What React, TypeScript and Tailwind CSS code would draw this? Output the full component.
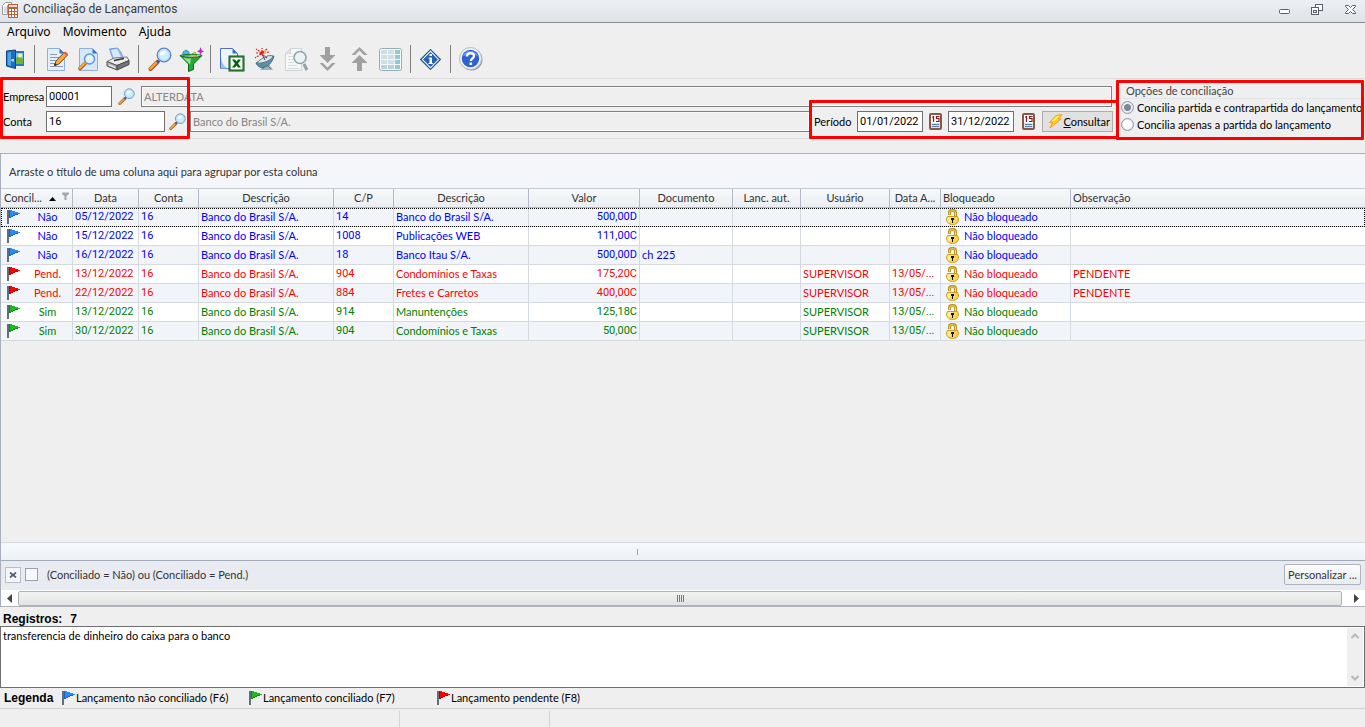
import { useState } from 'react';
import type { ReactNode } from 'react';

type Status = 'nao' | 'pend' | 'sim';

interface Entry {
    status: Status;
    date: string;
    account: string;
    description: string;
    counterpart: string;
    counterpartDescription: string;
    value: string;
    document?: string;
    user?: string;
    changed?: string;
    note?: string;
}

const BANK = 'Banco do Brasil S/A.';

const entries: Entry[] = [
    { status: 'nao', date: '05/12/2022', account: '16', description: BANK, counterpart: '14', counterpartDescription: BANK, value: '500,00D' },
    { status: 'nao', date: '15/12/2022', account: '16', description: BANK, counterpart: '1008', counterpartDescription: 'Publicações WEB', value: '111,00C' },
    { status: 'nao', date: '16/12/2022', account: '16', description: BANK, counterpart: '18', counterpartDescription: 'Banco Itau S/A.', value: '500,00D', document: 'ch 225' },
    { status: 'pend', date: '13/12/2022', account: '16', description: BANK, counterpart: '904', counterpartDescription: 'Condomínios e Taxas', value: '175,20C', user: 'SUPERVISOR', changed: '13/05/...', note: 'PENDENTE' },
    { status: 'pend', date: '22/12/2022', account: '16', description: BANK, counterpart: '884', counterpartDescription: 'Fretes e Carretos', value: '400,00C', user: 'SUPERVISOR', changed: '13/05/...', note: 'PENDENTE' },
    { status: 'sim', date: '13/12/2022', account: '16', description: BANK, counterpart: '914', counterpartDescription: 'Manuntenções', value: '125,18C', user: 'SUPERVISOR', changed: '13/05/...' },
    { status: 'sim', date: '30/12/2022', account: '16', description: BANK, counterpart: '904', counterpartDescription: 'Condomínios e Taxas', value: '50,00C', user: 'SUPERVISOR', changed: '13/05/...' },
];

const statusLabel: Record<Status, string> = { nao: 'Não', pend: 'Pend.', sim: 'Sim' };
const statusText: Record<Status, string> = { nao: 'text-[#0000ff]', pend: 'text-[#ff0000]', sim: 'text-[#008000]' };
const flagColors: Record<Status, [string, string]> = {
    nao: ['#2f8af0', '#1c5fc4'],
    pend: ['#f00808', '#c00000'],
    sim: ['#22b822', '#0f8a0f'],
};

const columns = [
    { label: 'Data', width: 'w-[66px]' },
    { label: 'Conta', width: 'w-[60px]' },
    { label: 'Descrição', width: 'w-[135px]' },
    { label: 'C/P', width: 'w-[60px]' },
    { label: 'Descrição', width: 'w-[135px]' },
    { label: 'Valor', width: 'w-[111px]' },
    { label: 'Documento', width: 'w-[93px]' },
    { label: 'Lanc. aut.', width: 'w-[68px]' },
    { label: 'Usuário', width: 'w-[89px]' },
    { label: 'Data A...', width: 'w-[51px]' },
];

function Flag({ status }: { status: Status }) {
    const [main, dark] = flagColors[status];
    return (
        <svg width="14" height="15" viewBox="0 0 14 15" className="shrink-0" shapeRendering="crispEdges">
            <path d="M0 0h2v14H0z" fill="#5f6f83" />
            <path d="M2 0h3v1h3v1h3v1h2v1h-2v1H8v1H6v1H4v1H2z" fill={main} />
            <path d="M2 7h2v1H2zM4 6h2v1H4zM6 5h2v1H6zM8 4h3v1H8zM2 0h1v7H2z" fill={dark} />
        </svg>
    );
}

function Padlock() {
    return (
        <svg width="13" height="16" viewBox="0 0 13 16" className="shrink-0">
            <path d="M3.500 6V3.500C3.500 0.800 9.500 0.800 9.500 3.500V8" fill="none" stroke="#bd9420" strokeWidth="3" />
            <path d="M3.500 5.500V3.500C3.500 1.200 9.500 1.200 9.500 3.500V8" fill="none" stroke="#f3e08a" strokeWidth="1" />
            <path d="M1.500 7.500h10l1 2.500c0 3.500-2.500 5.500-6 5.500s-6-2-6-5.500z" fill="#f9d65a" stroke="#cf9a1a" />
            <path d="M2 8h5l-4 6C1.500 12.500 1 11 1.500 9.500z" fill="#fff2b0" opacity=".8" />
            <path d="M5 9h3v2H7v3H6v-3H5z" fill="#111" />
        </svg>
    );
}

function Magnifier({ size }: { size: number }) {
    return (
        <svg width={size} height={size} viewBox="0 0 24 24" className="shrink-0">
            <path d="M2.500 22L9.500 15" stroke="#a85c1c" strokeWidth="4" strokeLinecap="round" />
            <path d="M2.500 21.500L9 15" stroke="#f9a640" strokeWidth="2.400" strokeLinecap="round" />
            <path d="M9 15.500l2-2" stroke="#3c5d93" strokeWidth="3" />
            <circle cx="16" cy="8" r="6.800" fill="#cdeefc" stroke="#5f86c4" strokeWidth="1.300" />
            <circle cx="16" cy="8" r="5.500" fill="none" stroke="#b9d9f5" strokeWidth="1.200" />
            <path d="M12 8c0-3 3-5 6-3.500C17 7 15 9 12 8z" fill="#fff" />
        </svg>
    );
}

function CalendarIcon() {
    return (
        <svg width="13" height="17" viewBox="0 0 13 17">
            <rect x="1" y="1" width="11" height="15" rx="1" fill="#cfe0f2" stroke="#8a5648" strokeWidth="2" />
            <path d="M2 2h9v8H2z" fill="#fff" />
            <path d="M3 4h1.500M4.500 3v6M10.500 3.500H7.500v2h2.500v3H7" fill="none" stroke="#8c1616" strokeWidth="1.200" />
            <path d="M3 11.500h7M3 13.500h7" stroke="#5d7fa8" />
        </svg>
    );
}

function AppIcon() {
    return (
        <svg width="17" height="17" viewBox="0 0 17 17">
            <path d="M3.500 1.500h6v3h-4v9h-5v-9z" fill="#f7f7f7" stroke="#9a9a9a" />
            <path d="M2 7h3M2 9h3M2 11h3" stroke="#bdbdbd" />
            <path d="M6 3h10v14H6z" fill="#b9603f" />
            <path d="M7 4h8v2H7z" fill="#fbe3d4" />
            <path d="M7 8h2v2H7zM10 8h2v2h-2zM13 8h2v2h-2zM7 11h2v2H7zM10 11h2v2h-2zM13 11h2v2h-2zM7 14h2v2H7zM10 14h2v2h-2zM13 14h2v2h-2z" fill="#fff" />
        </svg>
    );
}

function DoorIcon() {
    return (
        <svg width="19" height="21" viewBox="0 0 19 21">
            <path d="M6 2h12v15H6z" fill="#2d74b8" />
            <path d="M8 4h9v11H8z" fill="#7cc3f2" />
            <path d="M9 10c3-3 5-2 8 0v5H9z" fill="#6db432" />
            <circle cx="14" cy="6.500" r="2" fill="#fff6a0" />
            <path d="M.5 2l9-1v18.500L.5 17z" fill="#1b6fc0" stroke="#0c4380" />
            <path d="M1.500 3.500L5 3v14l-3.500-1z" fill="#49a7ee" />
            <path d="M5 11h3M7 10v3" stroke="#e8f4ff" />
        </svg>
    );
}

function EditIcon() {
    return (
        <svg width="23" height="25" viewBox="0 0 23 25">
            <path d="M1.500 1.500h12l5 5v17h-17z" fill="#e3effc" stroke="#8fb0da" />
            <path d="M13.500 1.500v5h5z" fill="#3d74c6" />
            <path d="M4 7.500h7M4 10.500h9M4 13.500h7M4 16.500h5M4 19.500h13" stroke="#8d9bb0" />
            <path d="M8.500 18.500l1.500-4.500L18.500 5l3 3-8.500 9z" fill="#f9ab38" stroke="#7a4a18" />
            <path d="M17.500 6l2-1.500 2.500 2.500-1.500 2z" fill="#e8584a" />
            <path d="M8 19l1-3 2 2z" fill="#222" />
        </svg>
    );
}

function PreviewIcon() {
    return (
        <svg width="21" height="25" viewBox="0 0 21 25">
            <path d="M1.500 1.500h13l5 5v17h-18z" fill="#d5e7fb" stroke="#8fb0da" />
            <path d="M14.500 1.500v5h5z" fill="#3d74c6" />
            <path d="M2 21.500l5.500-5.500" stroke="#a85c1c" strokeWidth="3.600" strokeLinecap="round" />
            <path d="M2 21l5-5" stroke="#f9a640" strokeWidth="2.200" strokeLinecap="round" />
            <circle cx="11.500" cy="12" r="5" fill="#d6f3ff" stroke="#6d94cc" strokeWidth="1.500" />
            <path d="M9 12c0-2 2-3 4-2-1 2-2 3-4 2z" fill="#fff" />
        </svg>
    );
}

function PrinterIcon() {
    return (
        <svg width="24" height="24" viewBox="0 0 24 24">
            <path d="M3.500 2l8-1 3 3.500 3 7-10 2z" fill="#8fbbf2" stroke="#6f9ade" />
            <path d="M5 3l6-1 4 8-7 2z" fill="#d8e9fc" />
            <path d="M1 14.500l7-3.500 13-1 2 3.500-12 5z" fill="#ececec" stroke="#777" />
            <path d="M1 14.500l10 4v4.500L1 19z" fill="#b5b5b5" stroke="#555" />
            <path d="M11 18.500l12-5v4L11 23z" fill="#777" stroke="#444" />
            <path d="M3 18l6 2.500" stroke="#f4f4f4" />
            <path d="M8 13.500l10-2" stroke="#333" strokeWidth="1.500" />
        </svg>
    );
}

function FunnelIcon() {
    return (
        <svg width="25" height="25" viewBox="0 0 25 25">
            <path d="M4 5l3-2 3 2v4H4z" fill="#54b4e4" stroke="#3b93c6" />
            <path d="M10 9l6-4 2 4z" fill="#f6d32a" stroke="#c99c14" />
            <path d="M21.500 0l1 3 2.500 1.500-2.500 1-1 3-1-3-2.500-1L20.500 3z" fill="#c322d0" />
            <path d="M1 8.500c5 2.500 18 2.500 22 0l-8.500 8.500v5.500l-5 2v-7.500z" fill="#27a83a" stroke="#0d6a1a" />
            <path d="M4 10.500c3 1 5 1 8 1l-1 6z" fill="#8fe88b" />
            <path d="M1 8.500c5-1.500 18-1.500 22 0" fill="none" stroke="#0f7a20" />
        </svg>
    );
}

function ExcelIcon() {
    return (
        <svg width="25" height="25" viewBox="0 0 25 25">
            <path d="M.5 1.500h12l5 5v15H.5z" fill="#eef5fe" stroke="#4d6fc0" />
            <path d="M1 8c0 6 2 11 7 13.500H1z" fill="#9dc0f0" />
            <path d="M12.500 1.500v5h5z" fill="#3d74c6" />
            <path d="M9.500 9.500h14v14h-14z" fill="#f4fcf4" stroke="#0c5a14" strokeWidth="2" />
            <path d="M9.500 9.500h14v14h-14z" fill="none" stroke="#3f8a45" strokeWidth="1" strokeDasharray="1 1" />
            <path d="M12 12.500h3l1.500 2 1.500-2h3l-3 4 3 4h-3l-1.500-2-1.500 2h-3l3-4z" fill="#0a5c12" />
        </svg>
    );
}

function SatelliteIcon() {
    return (
        <svg width="21" height="23" viewBox="0 0 21 23">
            <path d="M9 17l-3 5h13l-4-6z" fill="#9db4c0" />
            <path d="M9 21l1-4M13 17l4 4" stroke="#5a7583" />
            <path d="M2 15C5 23 17 20 20 8 16 9 8 11 2 15z" fill="#5f8fa8" stroke="#4a6c7e" />
            <path d="M3 15c3-4 11-9 16-7-1 4-10 8-16 7z" fill="#d4e9f1" stroke="#54798c" />
            <path d="M11 12L8 6" stroke="#445" />
            <path d="M8 5L2 1M7 5L1 5M7 6L1 10M8 4V0M9 4l4-3M10 5l5-1M9 7l4 3" stroke="#e02020" strokeWidth="1.200" strokeDasharray="2 1" />
            <circle cx="8" cy="5" r="1.800" fill="#e81818" />
            <path d="M10 3h2v2h-2z" fill="#f4b83a" />
        </svg>
    );
}

function SearchPageIcon() {
    return (
        <svg width="24" height="25" viewBox="0 0 24 25">
            <path d="M6.500 1.500h11v22h-16v-17z" fill="#f6f7f7" stroke="#cdd3d6" />
            <path d="M6.500 1.500v5h-5z" fill="#e3e7e9" stroke="#cdd3d6" />
            <path d="M4 9.500h5M4 12.500h5M4 15.500h6M4 18.500h9M4 21.500h11" stroke="#d5dadd" />
            <path d="M20 17l3 6" stroke="#8fa0a8" strokeWidth="3" />
            <circle cx="16" cy="10.500" r="6" fill="#edf3f5" stroke="#93a5ae" strokeWidth="1.700" />
        </svg>
    );
}

function DownIcon() {
    return (
        <svg width="17" height="24" viewBox="0 0 17 24" fill="#a0a0a0">
            <path d="M6 0h5v8h5.500l-8 8-8-8H6z" />
            <path d="M.5 16H4l4.500 4.500L13 16h3.500l-8 8z" />
        </svg>
    );
}

function UpIcon() {
    return (
        <svg width="17" height="24" viewBox="0 0 17 24" fill="#a0a0a0">
            <path d="M8.500 0l8 8H13L8.500 3.500 4 8H.5z" />
            <path d="M8.500 8l8 8H11v8H6v-8H.5z" />
        </svg>
    );
}

function GridIcon() {
    return (
        <svg width="23" height="23" viewBox="0 0 23 23">
            <rect x=".5" y=".5" width="22" height="22" rx="2" fill="#f4fafc" stroke="#94adba" />
            <path d="M2 2h6v4H2zM9 2h6v4H9zM2 7h6v4H2zM9 7h6v4H9zM2 12h6v4H2zM9 12h6v4H9z" fill="#cfe0e5" />
            <path d="M2 17h6v4H2zM9 17h6v4H9z" fill="#b5d3de" />
            <path d="M16 2h5v4h-5zM16 7h5v4h-5zM16 12h5v4h-5zM16 17h5v4h-5z" fill="#93c7d6" />
        </svg>
    );
}

function InfoIcon() {
    return (
        <svg width="21" height="21" viewBox="0 0 21 21">
            <path d="M10.500.7l9.800 9.800-9.800 9.800L.7 10.500z" fill="#fff" stroke="#24508f" strokeWidth="1.200" />
            <path d="M10.500 3l7.500 7.500-7.500 7.500L3 10.500z" fill="#2462b5" />
            <path d="M9.500 5h2.500v2H9.500zM8.500 8.500H12V14h1v1H8.500v-1h1V9.500h-1z" fill="#fff" />
        </svg>
    );
}

function HelpIcon() {
    return (
        <svg width="24" height="24" viewBox="0 0 24 24">
            <circle cx="12.500" cy="12.500" r="11" fill="#8f96a8" />
            <circle cx="11.500" cy="11.500" r="11" fill="#f2f4f9" stroke="#b3b9c9" />
            <circle cx="11.500" cy="11.500" r="8.700" fill="#2e62d2" />
            <path d="M4 9c2-6 12-7 15 0-5-2-10-1-15 0z" fill="#6c9af0" />
            <path d="M8 9.500C8 5 15 5 15 9c0 2.500-3.200 2.500-3.200 5" fill="none" stroke="#fff" strokeWidth="2.300" />
            <path d="M10.500 15.500h2.600v2.500h-2.600z" fill="#fff" />
        </svg>
    );
}

function BoltIcon() {
    return (
        <svg width="15" height="15" viewBox="0 0 15 15">
            <path d="M8 1.500l6-1-3.500 4.500h2.500L2 14l2.500-5.500H1.500z" fill="#ffd21f" stroke="#f59a24" strokeWidth="1" />
            <path d="M8 2.500l3-.5L7 6.500 4 7z" fill="#fff36a" />
        </svg>
    );
}

function ToolButton({ label, width, children }: { label: string; width: string; children: ReactNode }) {
    return (
        <button type="button" title={label} aria-label={label} className={`flex h-7 items-center justify-center ${width}`}>
            {children}
        </button>
    );
}

function Separator() {
    return <div className="mx-1 h-7 w-px bg-[#808080]" />;
}

const numberFont = 'font-[Roboto,Arial,sans-serif]';
const fieldClass = `h-[21px] border border-[#6f6f6f] bg-white px-[2px] text-black outline-none ${numberFont}`;
const readOnlyClass = 'h-[21px] min-w-0 flex-1 border border-[#808080] bg-[#efefef] px-[2px] text-[#868686] shadow-[inset_0_0_0_1px_#fafafa] outline-none';
const headClass = 'h-[19px] overflow-hidden border-r border-b border-[#b4bac4] bg-linear-to-b from-[#f7f9fa] to-[#e9edf1] p-0 text-center font-normal whitespace-nowrap text-[#333] last:border-r-0';
const radioClass = 'm-0 size-[13px] shrink-0 appearance-none rounded-full border border-[#8f98a8] bg-white shadow-[inset_0_0_0_1px_#dfe2e8] checked:bg-[radial-gradient(circle,#7d8798_0_3px,#eef0f4_4px)]';

export default function App() {
    const [mode, setMode] = useState<'both' | 'single'>('both');
    const [company, setCompany] = useState('00001');
    const [account, setAccount] = useState('16');
    const [start, setStart] = useState('01/01/2022');
    const [end, setEnd] = useState('31/12/2022');
    const [memo, setMemo] = useState('transferencia de dinheiro do caixa para o banco');

    return (
        <div className="flex min-h-screen flex-col bg-[#efefef] font-[Lato,Arial,sans-serif] text-[11px] leading-[14px] text-black">
            {/* Title bar */}
            <header className="flex h-[23px] items-center border-b border-[#868c95] bg-linear-to-b from-[#eceff3] to-[#dfe3e8] pb-1 pl-[2px] font-[Roboto,sans-serif] text-[12px]">
                <AppIcon />
                <h1 className="ml-1 text-[#3b3b3b]">Conciliação de Lançamentos</h1>
                <div className="mr-2 ml-auto flex items-center gap-5">
                    <button type="button" aria-label="Minimizar">
                        <svg width="13" height="13" viewBox="0 0 13 13">
                            <rect x="1.500" y="6.500" width="10" height="4" rx="1" fill="#fff" stroke="#5a5f68" />
                        </svg>
                    </button>
                    <button type="button" aria-label="Restaurar">
                        <svg width="13" height="13" viewBox="0 0 13 13" fill="#fff" stroke="#5a5f68">
                            <rect x="4.500" y="1.500" width="7" height="6" />
                            <rect x=".5" y="4.500" width="7" height="7" />
                            <rect x="2.500" y="7.500" width="3" height="2" />
                        </svg>
                    </button>
                    <button type="button" aria-label="Fechar">
                        <svg width="13" height="13" viewBox="0 0 13 13">
                            <path d="M1.500 2.500h3l2 2 2-2h3v1l-3 3 3 3v1h-3l-2-2-2 2h-3v-1l3-3-3-3z" fill="#fff" stroke="#5a5f68" />
                        </svg>
                    </button>
                </div>
            </header>

            {/* Menu */}
            <nav className="flex h-[19px] items-center gap-3 pb-[2px] pl-[7px] font-['Noto_Sans',sans-serif] text-[12px]">
                <button type="button">Arquivo</button>
                <button type="button">Movimento</button>
                <button type="button">Ajuda</button>
            </nav>

            {/* Toolbar */}
            <div className="flex h-[37px] items-center border-b border-[#dcdcdc] pb-[2px]">
                <ToolButton label="Sair" width="w-[30px]"><DoorIcon /></ToolButton>
                <Separator />
                <ToolButton label="Editar" width="w-9"><EditIcon /></ToolButton>
                <ToolButton label="Visualizar" width="w-[27px]"><PreviewIcon /></ToolButton>
                <ToolButton label="Imprimir" width="w-8"><PrinterIcon /></ToolButton>
                <Separator />
                <ToolButton label="Pesquisar" width="w-[34px]"><Magnifier size={24} /></ToolButton>
                <ToolButton label="Filtrar" width="w-[29px]"><FunnelIcon /></ToolButton>
                <Separator />
                <ToolButton label="Exportar" width="w-[34px]"><ExcelIcon /></ToolButton>
                <ToolButton label="Transmitir" width="w-[31px]"><SatelliteIcon /></ToolButton>
                <ToolButton label="Localizar" width="w-[31px]"><SearchPageIcon /></ToolButton>
                <ToolButton label="Descer" width="w-8"><DownIcon /></ToolButton>
                <ToolButton label="Subir" width="w-8"><UpIcon /></ToolButton>
                <ToolButton label="Grade" width="w-[31px]"><GridIcon /></ToolButton>
                <Separator />
                <ToolButton label="Informações" width="w-[31px]"><InfoIcon /></ToolButton>
                <Separator />
                <ToolButton label="Ajuda" width="w-8"><HelpIcon /></ToolButton>
            </div>

            {/* Filters */}
            <section className="relative mb-[14px] flex h-[60px] border-b border-[#dcdcdc]">
                <div className="flex min-w-0 flex-1 flex-col gap-1 pt-[7px] pl-[3px]">
                    <div className="flex items-center">
                        <label htmlFor="company" className="w-[43px] shrink-0">Empresa</label>
                        <input id="company" value={company} onChange={(e) => setCompany(e.target.value)} className={`w-[66px] ${fieldClass}`} />
                        <button type="button" aria-label="Pesquisar empresa" className="mx-1 flex w-[21px] justify-center"><Magnifier size={17} /></button>
                        <input aria-label="Nome da empresa" readOnly value="ALTERDATA" className={`mr-1 ${readOnlyClass}`} />
                    </div>
                    <div className="flex items-center">
                        <label htmlFor="account" className="w-[43px] shrink-0">Conta</label>
                        <input id="account" value={account} onChange={(e) => setAccount(e.target.value)} className={`w-[119px] ${fieldClass}`} />
                        <button type="button" aria-label="Pesquisar conta" className="mx-1 flex w-[17px] justify-center"><Magnifier size={17} /></button>
                        <input aria-label="Nome da conta" readOnly value={BANK} className={readOnlyClass} />
                        <div className="flex shrink-0 items-center pr-[3px] pl-1">
                            <label htmlFor="start" className="w-[43px]">Período</label>
                            <input id="start" value={start} onChange={(e) => setStart(e.target.value)} className={`w-[66px] ${fieldClass}`} />
                            <button type="button" aria-label="Data inicial" className="flex w-[25px] justify-center"><CalendarIcon /></button>
                            <input id="end" aria-label="Data final" value={end} onChange={(e) => setEnd(e.target.value)} className={`w-[66px] ${fieldClass}`} />
                            <button type="button" aria-label="Escolher data final" className="flex w-7 justify-center"><CalendarIcon /></button>
                            <button type="button" className="flex h-[21px] w-[71px] items-center justify-between border border-[#adadad] bg-[#e1e1e1] pr-[2px] pl-[5px]">
                                <BoltIcon />
                                <span><u>C</u>onsultar</span>
                            </button>
                        </div>
                    </div>
                </div>
                <fieldset className="w-[249px] min-w-0 shrink-0 pt-[5px] pl-[5px] whitespace-nowrap">
                    <legend className="float-left w-full border-b border-[#e2e5e8] pl-[5px] text-[#444]">Opções de conciliação</legend>
                    <label className="clear-both flex h-[17px] items-center gap-[3px]">
                        <input type="radio" name="mode" checked={mode === 'both'} onChange={() => setMode('both')} className={radioClass} />
                        Concilia partida e contrapartida do lançamento
                    </label>
                    <label className="flex h-[17px] items-center gap-[3px]">
                        <input type="radio" name="mode" checked={mode === 'single'} onChange={() => setMode('single')} className={radioClass} />
                        Concilia apenas a partida do lançamento
                    </label>
                </fieldset>

                {/* Highlight frames */}
                <div className="pointer-events-none absolute -top-[2px] left-0 h-[62px] w-[190px] rounded-[1px] border-[3px] border-[#ff0000]" />
                <div className="pointer-events-none absolute top-[21px] right-[246px] h-[39px] w-[310px] rounded-[1px] border-[3px] border-[#ff0000]" />
                <div className="pointer-events-none absolute top-px right-px h-[60px] w-[248px] rounded-[1px] border-[3px] border-[#ff0000]" />
            </section>

            {/* Grid */}
            <section className="flex flex-1 flex-col border-t border-l border-[#a9b0bb]">
                <div className="flex h-[35px] items-center border-b border-[#c5cad2] bg-[#f4f6f9] px-2 pt-[2px] text-[#333]">
                    Arraste o título de uma coluna aqui para agrupar por esta coluna
                </div>
                <table className="w-full table-fixed border-separate border-spacing-0">
                    <thead>
                        <tr>
                            <th className={`w-[72px] ${headClass}`}>
                                <span className="flex items-center pr-[3px] pl-[3px]">
                                    Concil...
                                    <svg width="7" height="4" viewBox="0 0 7 4" className="mt-px mr-[6px] ml-auto"><path d="M3.500 0L7 4H0z" fill="#000" /></svg>
                                    <svg width="7" height="8" viewBox="0 0 7 8" className="mb-1"><path d="M0 .5h7v1.500L4.500 4v4h-2V4L0 2z" fill="#a3a7ad" /></svg>
                                </span>
                            </th>
                            {columns.map((col, i) => (
                                <th key={i} className={`${col.width} ${headClass}`}>{col.label}</th>
                            ))}
                            <th className={`w-[130px] ${headClass}`}><span className="block pl-[2px] text-left">Bloqueado</span></th>
                            <th className={headClass}><span className="block pl-[2px] text-left">Observação</span></th>
                        </tr>
                    </thead>
                    <tbody>
                        {entries.map((entry, i) => (
                            <tr
                                key={i}
                                className={`${statusText[entry.status]} ${i % 2 === 0 ? 'bg-[#f1f5fa]' : 'bg-white'} ${i === 0 ? 'outline-1 -outline-offset-1 outline-black outline-dotted' : ''} [&>td]:h-[19px] [&>td]:overflow-hidden [&>td]:border-r [&>td]:border-b [&>td]:border-[#d5dae1] [&>td]:px-[2px] [&>td]:py-0 [&>td]:whitespace-nowrap [&>td:last-child]:border-r-0`}
                            >
                                <td>
                                    <div className="flex items-center pl-1">
                                        <Flag status={entry.status} />
                                        <span className="flex-1 pl-3 text-center">{statusLabel[entry.status]}</span>
                                        <span className="w-2" />
                                    </div>
                                </td>
                                <td className={numberFont}>{entry.date}</td>
                                <td className={numberFont}>{entry.account}</td>
                                <td>{entry.description}</td>
                                <td className={numberFont}>{entry.counterpart}</td>
                                <td>{entry.counterpartDescription}</td>
                                <td className={`text-right ${numberFont}`}>{entry.value}</td>
                                <td>{entry.document}</td>
                                <td />
                                <td>{entry.user}</td>
                                <td className={numberFont}>{entry.changed}</td>
                                <td>
                                    <div className="flex items-center gap-[5px] pl-[3px]">
                                        <Padlock />
                                        Não bloqueado
                                    </div>
                                </td>
                                <td>{entry.note}</td>
                            </tr>
                        ))}
                    </tbody>
                </table>
                <div className="flex-1" />

                {/* Footer */}
                <div className="flex h-[19px] items-center border-t border-b border-t-[#d5dae1] border-b-[#a3abb8] bg-linear-to-b from-[#f6f9fb] to-[#edf1f6]">
                    <div className="ml-[636px] h-[6px] w-px bg-[#9aa3b2]" />
                </div>
                <div className="flex h-[29px] items-center bg-[#e8ebf1] pr-1 pb-[2px] pl-1 text-[#333]">
                    <button type="button" aria-label="Limpar filtro" className="flex size-4 items-center justify-center border border-[#b8bdc6] bg-[#f3f5f8]">
                        <svg width="8" height="6" viewBox="0 0 8 6"><path d="M1 .5l6 5M7 .5l-6 5" stroke="#555e70" strokeWidth="1.700" /></svg>
                    </button>
                    <input id="active-filter" type="checkbox" className="mr-[9px] ml-1 size-[13px] appearance-none border border-[#9aa0aa] bg-[#f7f8fa] checked:bg-[#7d8798]" />
                    <label htmlFor="active-filter">(Conciliado = Não) ou (Conciliado = Pend.)</label>
                    <button type="button" className="ml-auto h-[21px] w-[77px] rounded-[2px] border border-[#b0b4ba] bg-linear-to-b from-[#fbfcfd] to-[#e9ecf0] whitespace-nowrap">Personalizar ...</button>
                </div>
                <div className="flex h-[17px] items-center border-b border-[#b0b4ba] bg-white">
                    <button type="button" aria-label="Rolar para a esquerda" className="flex w-[17px] justify-center">
                        <svg width="5" height="9" viewBox="0 0 5 9"><path d="M5 0v9L0 4.500z" fill="#444" /></svg>
                    </button>
                    <div className="flex h-[15px] flex-1 items-center justify-center gap-px rounded-[2px] border border-[#b0b4ba] bg-linear-to-b from-[#f1f2f2] to-[#e2e4e4]">
                        {[0, 1, 2, 3].map((n) => <span key={n} className="h-[7px] w-px bg-[#777]" />)}
                    </div>
                    <button type="button" aria-label="Rolar para a direita" className="flex w-[23px] justify-center pl-[6px]">
                        <svg width="5" height="9" viewBox="0 0 5 9"><path d="M0 0v9l5-4.500z" fill="#444" /></svg>
                    </button>
                </div>
            </section>

            <div className="flex h-[19px] items-center gap-2 px-[3px] pt-1 font-['Liberation_Sans',Arial,sans-serif] text-[12px] font-bold">
                <span>Registros:</span>
                <span>7</span>
            </div>

            <div className="flex h-[62px] border border-[#6f6f6f] bg-white">
                <textarea
                    aria-label="Histórico"
                    value={memo}
                    onChange={(e) => setMemo(e.target.value)}
                    className="block flex-1 resize-none overflow-hidden px-[2px] py-[2px] outline-none"
                />
                <div className="my-px mr-px flex w-4 flex-col items-center justify-between bg-[#efefef] py-[5px]">
                    <svg width="8" height="6" viewBox="0 0 8 6"><path d="M.5 5L4 1.500 7.500 5" fill="none" stroke="#b8b8b8" strokeWidth="2" /></svg>
                    <svg width="8" height="6" viewBox="0 0 8 6"><path d="M.5 1L4 4.500 7.500 1" fill="none" stroke="#b8b8b8" strokeWidth="2" /></svg>
                </div>
            </div>

            {/* Legend */}
            <div className="flex h-[21px] items-center border-b border-[#d0d0d0] pl-1">
                <b className="w-[58px] font-['Liberation_Sans',Arial,sans-serif] text-[12px]">Legenda</b>
                <span className="flex w-[187px] items-center"><Flag status="nao" />Lançamento não conciliado (F6)</span>
                <span className="flex w-[188px] items-center"><Flag status="sim" />Lançamento conciliado (F7)</span>
                <span className="flex items-center"><Flag status="pend" />Lançamento pendente (F8)</span>
            </div>

            <footer className="flex h-[18px] pt-[2px]">
                <div className="w-[400px] border-r border-[#d5d5d5]" />
                <div className="w-[150px] border-r border-[#d5d5d5]" />
            </footer>
        </div>
    );
}
